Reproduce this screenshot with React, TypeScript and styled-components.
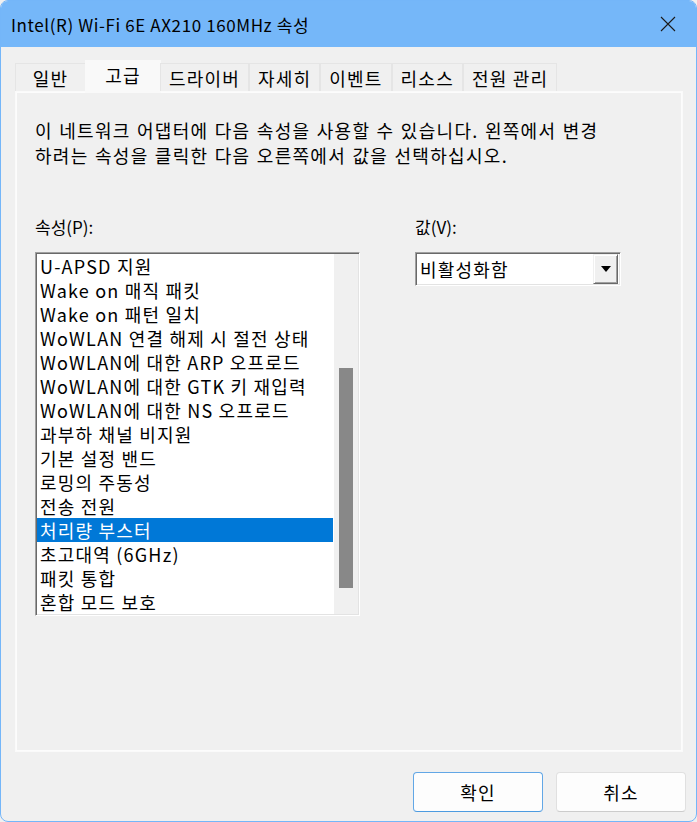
import React, { useState } from "react"
import styled, { createGlobalStyle } from "styled-components"

const GlobalStyle = createGlobalStyle`
  html, body {
    margin: 0;
    padding: 0;
    background: #f0f0f0;
  }
  body {
    font-family: "Noto Sans CJK KR", "Noto Sans", sans-serif;
    color: #000000;
  }
`

const Window = styled.div`
  box-sizing: border-box;
  width: 697px;
  height: 822px;
  border: 1px solid #74b6f9;
  border-radius: 8px;
  overflow: hidden;
  background: #f0f0f0;
  display: flex;
  flex-direction: column;
`

const TitleBar = styled.header`
  height: 46px;
  flex: none;
  background: #75b7f9;
  display: flex;
  align-items: center;
  justify-content: space-between;
  padding: 0 20px 0 10px;
`

const Title = styled.span`
  font-size: 17px;
  letter-spacing: 0.6px;
`

const CloseButton = styled.button`
  border: 0;
  background: transparent;
  padding: 0;
  width: 16px;
  height: 16px;
  display: flex;
`

const Body = styled.div`
  flex: 1;
  display: flex;
  flex-direction: column;
  padding: 13px 13px 0 14px;
`

const TabRow = styled.div`
  display: flex;
  align-items: flex-end;
  height: 31px;
  position: relative;
  z-index: 1;
`

const Tab = styled.div<{ $active?: boolean }>`
  box-sizing: border-box;
  min-width: ${p => (p.$active ? "76px" : "71px")};
  height: ${p => (p.$active ? "33px" : "28px")};
  margin-bottom: ${p => (p.$active ? "-2px" : "0")};
  padding: ${p => (p.$active ? "0 10px 5px" : "0 8px")};
  margin-left: ${p => (p.$active ? "-1px" : "0")};
  margin-right: ${p => (p.$active ? "-1px" : "0")};
  background: ${p => (p.$active ? "#f9f9f9" : "#f0f0f0")};
  border: 1px solid ${p => (p.$active ? "#f9f9f9" : "#e5e5e5")};
  border-bottom: none;
  display: flex;
  align-items: center;
  justify-content: center;
  font-size: 18px;
  letter-spacing: 1.2px;
  white-space: nowrap;
`

const Panel = styled.section`
  flex: 1;
  display: flex;
  flex-direction: column;
  border: 1px solid #fafafa;
  box-shadow: inset 0 0 0 1px #fcfcfc;
  background: #f0f0f0;
  padding: 26px 19px 0 19px;
`

const Description = styled.p`
  margin: 0;
  font-size: 18px;
  line-height: 25px;
  letter-spacing: 1.3px;
  word-spacing: 1px;
`

const Columns = styled.div`
  display: flex;
  margin-top: 47px;
  gap: 55px;
`

const Column = styled.div`
  display: flex;
  flex-direction: column;
`

const Label = styled.label`
  font-size: 17px;
  line-height: 24px;
  margin-bottom: 13px;
`

const ListBox = styled.div`
  box-sizing: border-box;
  width: 325px;
  height: 364px;
  border: 1px solid;
  border-color: #a0a0a0 #ffffff #ffffff #a0a0a0;
  box-shadow: inset 1px 1px 0 #696969, inset -1px -1px 0 #e3e3e3;
  padding: 1px;
  display: flex;
`

const ListItems = styled.ul`
  list-style: none;
  margin: 0;
  padding: 0;
  flex: 1;
  background: #ffffff;
  overflow: hidden;
`

const Item = styled.li<{ $selected?: boolean }>`
  height: 24px;
  line-height: 24px;
  font-size: 18px;
  letter-spacing: 1.2px;
  padding-left: 3px;
  margin-right: 1px;
  white-space: nowrap;
  background: ${p => (p.$selected ? "#0078d7" : "transparent")};
  color: ${p => (p.$selected ? "#ffffff" : "#000000")};
  cursor: default;
`

const Scrollbar = styled.div`
  width: 24px;
  background: #f0f0f0;
  position: relative;
`

const Thumb = styled.div`
  position: absolute;
  left: 5px;
  width: 14px;
  background: #888888;
`

const Select = styled.div`
  box-sizing: border-box;
  width: 206px;
  height: 34px;
  border: 1px solid;
  border-color: #a0a0a0 #ffffff #ffffff #a0a0a0;
  box-shadow: inset 1px 1px 0 #696969, inset -1px -1px 0 #e3e3e3;
  background: #ffffff;
  padding: 2px 2px 2px 4px;
  display: flex;
  align-items: center;
  justify-content: space-between;
  font-size: 18px;
  letter-spacing: 1.2px;
`

const SelectButton = styled.div`
  box-sizing: border-box;
  width: 25px;
  height: 30px;
  background: #f0f0f0;
  border: 1px solid;
  border-color: #f0f0f0 #696969 #696969 #f0f0f0;
  box-shadow: inset 1px 1px 0 #ffffff, inset -1px -1px 0 #a0a0a0;
  display: flex;
  align-items: center;
  justify-content: center;
`

const Footer = styled.footer`
  height: 69px;
  flex: none;
  display: flex;
  justify-content: flex-end;
  align-items: flex-start;
  gap: 13px;
  padding: 20px 10px 0 0;
  box-sizing: border-box;
`

const Button = styled.button<{ $primary?: boolean }>`
  width: 130px;
  height: 40px;
  border-radius: 4px;
  background: #fdfdfd;
  border: 1px solid ${p => (p.$primary ? "#62a7e6" : "#e0e0e0")};
  border-bottom-color: ${p => (p.$primary ? "#4d9be0" : "#cccccc")};
  font-family: "Noto Sans CJK KR", "Noto Sans", sans-serif;
  font-size: 18px;
  letter-spacing: 1.2px;
  color: #000000;
  padding: 0;
`

const tabs = ["일반", "고급", "드라이버", "자세히", "이벤트", "리소스", "전원 관리"]

const properties = [
  "U-APSD 지원",
  "Wake on 매직 패킷",
  "Wake on 패턴 일치",
  "WoWLAN 연결 해제 시 절전 상태",
  "WoWLAN에 대한 ARP 오프로드",
  "WoWLAN에 대한 GTK 키 재입력",
  "WoWLAN에 대한 NS 오프로드",
  "과부하 채널 비지원",
  "기본 설정 밴드",
  "로밍의 주동성",
  "전송 전원",
  "처리량 부스터",
  "초고대역 (6GHz)",
  "패킷 통합",
  "혼합 모드 보호",
]

export default function App() {
  const [activeTab, setActiveTab] = useState("고급")
  const [selected, setSelected] = useState("처리량 부스터")

  return (
    <>
      <GlobalStyle />
      <Window>
        <TitleBar>
          <Title>Intel(R) Wi-Fi 6E AX210 160MHz 속성</Title>
          <CloseButton aria-label="닫기">
            <svg width="16" height="16" viewBox="0 0 16 16">
              <path d="M1 1 L15 15 M15 1 L1 15" stroke="#1a1a1a" strokeWidth="1.1" fill="none" />
            </svg>
          </CloseButton>
        </TitleBar>
        <Body>
          <TabRow>
            {tabs.map(t => (
              <Tab key={t} $active={t === activeTab} onClick={() => setActiveTab(t)}>
                {t}
              </Tab>
            ))}
          </TabRow>
          <Panel>
            <Description>
              이 네트워크 어댑터에 다음 속성을 사용할 수 있습니다. 왼쪽에서 변경
              <br />
              하려는 속성을 클릭한 다음 오른쪽에서 값을 선택하십시오.
            </Description>
            <Columns>
              <Column>
                <Label>속성(P):</Label>
                <ListBox>
                  <ListItems>
                    {properties.map(p => (
                      <Item key={p} $selected={p === selected} onClick={() => setSelected(p)}>
                        {p}
                      </Item>
                    ))}
                  </ListItems>
                  <Scrollbar>
                    <Thumb style={{ top: 114, height: 220 }} />
                  </Scrollbar>
                </ListBox>
              </Column>
              <Column>
                <Label>값(V):</Label>
                <Select>
                  <span>비활성화함</span>
                  <SelectButton>
                    <svg width="10" height="6" viewBox="0 0 10 6">
                      <path d="M0 0 H10 L5 6 Z" fill="#000" />
                    </svg>
                  </SelectButton>
                </Select>
              </Column>
            </Columns>
          </Panel>
        </Body>
        <Footer>
          <Button $primary>확인</Button>
          <Button>취소</Button>
        </Footer>
      </Window>
    </>
  )
}
